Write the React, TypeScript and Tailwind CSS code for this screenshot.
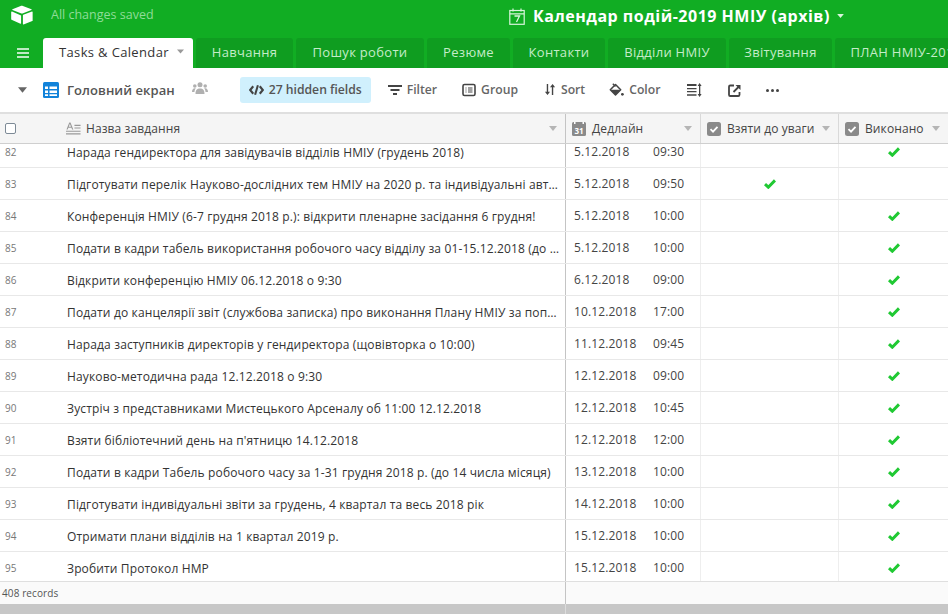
import React from "react";

const font = { fontFamily: '"Open Sans", "Noto Sans", sans-serif' };

const rows: [string, string, string, string, boolean, boolean][] = [
  ["82", "Нарада гендиректора для завідувачів відділів НМІУ (грудень 2018)", "5.12.2018", "09:30", false, true],
  ["83", "Підготувати перелік Науково-дослідних тем НМІУ на 2020 р. та індивідуальні автор", "5.12.2018", "09:50", true, false],
  ["84", "Конференція НМІУ (6-7 грудня 2018 р.): відкрити пленарне засідання 6 грудня!", "5.12.2018", "10:00", false, true],
  ["85", "Подати в кадри табель використання робочого часу відділу за 01-15.12.2018 (до 15 числа)", "5.12.2018", "10:00", false, true],
  ["86", "Відкрити конференцію НМІУ 06.12.2018 о 9:30", "6.12.2018", "09:00", false, true],
  ["87", "Подати до канцелярії звіт (службова записка) про виконання Плану НМІУ за попередній", "10.12.2018", "17:00", false, true],
  ["88", "Нарада заступників директорів у гендиректора (щовівторка о 10:00)", "11.12.2018", "09:45", false, true],
  ["89", "Науково-методична рада 12.12.2018 о 9:30", "12.12.2018", "09:00", false, true],
  ["90", "Зустріч з представниками Мистецького Арсеналу об 11:00 12.12.2018", "12.12.2018", "10:45", false, true],
  ["91", "Взяти бібліотечний день на п'ятницю 14.12.2018", "12.12.2018", "12:00", false, true],
  ["92", "Подати в кадри Табель робочого часу за 1-31 грудня 2018 р. (до 14 числа місяця)", "13.12.2018", "10:00", false, true],
  ["93", "Підготувати індивідуальні звіти за грудень, 4 квартал та весь 2018 рік", "14.12.2018", "10:00", false, true],
  ["94", "Отримати плани відділів на 1 квартал 2019 р.", "15.12.2018", "10:00", false, true],
  ["95", "Зробити Протокол НМР", "15.12.2018", "10:00", false, true],
];

const tabs: [string, string][] = [
  ["Навчання", "w-[97px]"],
  ["Пошук роботи", "w-[128px]"],
  ["Резюме", "w-[83px]"],
  ["Контакти", "w-[92px]"],
  ["Відділи НМІУ", "w-[118px]"],
  ["Звітування", "w-[103px]"],
  ["ПЛАН НМІУ-2019", "w-[142px]"],
];

const Caret = ({ className = "" }: { className?: string }) => (
  <svg viewBox="0 0 10 6" className={className} fill="currentColor">
    <path d="M0 0h10L5 6z" />
  </svg>
);

const Check = () => (
  <svg viewBox="0 0 12 10" className="h-[10px] w-[12px]" fill="none" stroke="#20c933" strokeWidth="3">
    <path d="M1 5.200 4.300 8.200 11 1.400" />
  </svg>
);

const CheckBoxIcon = () => (
  <svg viewBox="0 0 14 14" className="h-[14px] w-[14px] shrink-0">
    <rect width="14" height="14" rx="2.500" fill="#8a8a8a" />
    <path d="M3.500 7.200 6 9.600 10.500 4.800" fill="none" stroke="#fff" strokeWidth="1.800" />
  </svg>
);

const HeaderCell = ({ icon, label, className }: { icon: React.ReactNode; label: string; className: string }) => (
  <div className={`flex h-full shrink-0 items-center border-r border-[#d9d9d9] ${className}`}>
    {icon}
    <span className="ml-[6px] text-[12px] tracking-[0.1px] text-[#444]">{label}</span>
    <Caret className="mr-[8px] ml-auto h-[5px] w-[8px] text-[#b5b5b5]" />
  </div>
);

const ToolItem = ({ icon, label, className = "" }: { icon: React.ReactNode; label: string; className?: string }) => (
  <div className={`flex items-center gap-[5px] text-[12.200px] font-semibold text-[#666] ${className}`}>
    {icon}
    <span className="pt-[1px]">{label}</span>
  </div>
);

export default function App() {
  return (
    <div style={font} className="flex h-[614px] w-[948px] flex-col overflow-hidden bg-white">
      {/* top bar */}
      <div className="relative flex h-[38px] shrink-0 items-center bg-[#11ad23] pb-[8px]">
        <svg viewBox="0 0 24 22" className="ml-[11px] h-[20px] w-[22px]" fill="#fff">
          <path d="M10.500 1 1.500 4.600c-.4.2-.4.7 0 .9l9.200 3.600c.8.3 1.700.3 2.500 0l9.200-3.600c.4-.2.4-.7 0-.9L13 1c-.8-.4-1.700-.4-2.500 0z" />
          <path d="M13 11.300v9.600c0 .4.4.6.7.5l9.600-3.700c.3-.1.4-.3.4-.5V7.600c0-.4-.4-.6-.7-.5L13.400 10.800c-.2.1-.4.3-.4.5z" />
          <path d="M11 11.600 1 7.200c-.4-.2-.9.1-.9.5v8c0 .3.1.5.4.6l9.800 4.300c.4.1.7-.1.7-.5z" />
        </svg>
        <span className="ml-[18px] text-[12.500px] text-[#8fdc98]">All changes saved</span>
        <div className="absolute top-0 left-[509px] flex h-[32px] items-center">
          <svg viewBox="0 0 16 17" className="h-[17px] w-[16px]" fill="none" stroke="#d9f5dc" strokeWidth="1.200">
            <rect x="0.800" y="2.500" width="14.400" height="13.800" />
            <path d="M.8 5.800h14.400M4 .5v3M12 .5v3" />
            <path d="M5.500 8h5L7.500 14" strokeWidth="1.300" />
          </svg>
          <span className="ml-[8px] text-[16px] font-bold tracking-[0.5px] whitespace-nowrap text-white">Календар подій-2019 НМІУ (архів)</span>
          <Caret className="ml-[7px] h-[4px] w-[7px] text-[#d9f5dc]" />
        </div>
      </div>

      {/* tabs */}
      <div className="flex h-[30px] shrink-0 items-end bg-[#11ad23]">
        <div className="flex h-[30px] w-[43px] shrink-0 items-center justify-center pl-[2px]">
          <div className="flex w-[12px] flex-col gap-[2px]">
            <div className="h-[2px] bg-[#bdeac3]" />
            <div className="h-[2px] bg-[#bdeac3]" />
            <div className="h-[2px] bg-[#bdeac3]" />
          </div>
        </div>
        <div className="relative flex h-[30px] w-[150px] shrink-0 items-center rounded-t-[3px] bg-white pl-[16px] text-[13px] tracking-[0.35px] text-[#333]">
          Tasks &amp; Calendar
          <Caret className="absolute top-[11px] right-[9px] h-[5px] w-[7px] text-[#999]" />
        </div>
        <div className="ml-[3px] flex h-[30px] gap-[3px]">
          {tabs.map(([t, w]) => (
            <div key={t} className={`flex h-[30px] shrink-0 items-center justify-center rounded-t-[3px] bg-[#0f9d20] text-[13px] tracking-[0.3px] whitespace-nowrap text-[#c4ecc9] ${w}`}>
              {t}
            </div>
          ))}
        </div>
      </div>

      {/* toolbar */}
      <div className="flex h-[44px] shrink-0 items-center">
        <Caret className="ml-[18px] h-[6px] w-[9px] text-[#666]" />
        <svg viewBox="0 0 16 16" className="ml-[16px] h-[16px] w-[16px]">
          <rect width="16" height="16" rx="1.500" fill="#1283da" />
          <path d="M2 4.500h3v2.500H2zM6.500 4.500h7.500v2.500H6.500zM2 8.500h3V11H2zM6.500 8.500h7.500V11H6.500zM2 12.300h3v1.700H2zM6.500 12.300h7.500v1.700H6.500z" fill="#fff" />
        </svg>
        <span className="ml-[8px] pt-[2px] text-[13px] font-semibold tracking-[0.05px] text-[#555]">Головний екран</span>
        <svg viewBox="0 0 16 12" className="mb-[4px] ml-[17px] h-[12px] w-[16px]" fill="#b0b0b0">
          <circle cx="8" cy="2.700" r="2.500" />
          <circle cx="2.800" cy="4" r="1.800" />
          <circle cx="13.200" cy="4" r="1.800" />
          <path d="M3.500 12c0-4 1.500-5.500 4.500-5.500s4.500 1.500 4.500 5.500zM0 10c0-2 .8-3.800 2.800-3.800.5 0 .7.100 1 .3C2.800 7.500 2.500 8.700 2.500 10zM16 10c0-2-.8-3.800-2.800-3.800-.5 0-.7.100-1 .3 1 1 1.300 2.200 1.300 3.500z" />
        </svg>
        <div className="ml-[32px] flex h-[26px] w-[131px] shrink-0 items-center rounded-[3px] bg-[#d0f0fd] pl-[9px] text-[12.200px] font-semibold text-[#555]">
          <svg viewBox="0 0 16 12" className="mr-[5px] h-[12px] w-[15px]" fill="none" stroke="#444" strokeWidth="2.200">
            <path d="M4.500 2 1.300 6l3.200 4M11.500 2l3.200 4-3.200 4M9.500 1 6.500 11" />
          </svg>
          <span className="pt-[1px]">27 hidden fields</span>
        </div>
        <ToolItem
          className="ml-[17px]"
          label="Filter"
          icon={
            <svg viewBox="0 0 14 12" className="h-[12px] w-[14px]" fill="#444">
              <path d="M0 1h14v2H0zM2.500 5h9v2h-9zM5 9h4v2H5z" />
            </svg>
          }
        />
        <ToolItem
          className="ml-[25px]"
          label="Group"
          icon={
            <svg viewBox="0 0 14 14" className="h-[14px] w-[14px]" fill="none" stroke="#444">
              <rect x="1" y="1.500" width="12" height="11" rx="1.500" strokeWidth="1.600" />
              <path d="M3.500 5h1M6 5h4.500M3.500 7h1M6 7h4.500M3.500 9h1M6 9h4.500" strokeWidth="1.200" />
            </svg>
          }
        />
        <ToolItem
          className="ml-[26px]"
          label="Sort"
          icon={
            <svg viewBox="0 0 13 13" className="h-[13px] w-[12px]" fill="#444">
              <path d="M3 .5h1.500v8.500H6.500L3.800 12.500 1 9h2zM8.500 12.500H10V4h2L9.300.5 6.500 4h2z" />
            </svg>
          }
        />
        <ToolItem
          className="ml-[24px]"
          label="Color"
          icon={
            <svg viewBox="0 0 15 14" className="h-[14px] w-[15px]">
              <path d="M6.500 1.500 11.700 6.800 6.500 12 1.300 6.800z" fill="none" stroke="#444" strokeWidth="1.500" strokeLinejoin="round" />
              <path d="M1.300 6.800H11.700L6.500 12z" fill="#444" />
              <path d="M3.800 .8 6.500 3.500" stroke="#444" strokeWidth="1.400" />
              <circle cx="13.400" cy="11.300" r="1.400" fill="#444" />
            </svg>
          }
        />
        <svg viewBox="0 0 15 14" className="ml-[27px] h-[14px] w-[15px]" fill="#444">
          <path d="M0 1h9.500v2H0zM0 5h9.500v1.200H0zM0 8h9.500v1.200H0zM0 11.300h9.500v1.500H0z" />
          <path d="M12 2h1.300v10H12z" />
          <path d="M12.600 0l2 3h-4zM12.600 14l2-3h-4z" />
        </svg>
        <svg viewBox="0 0 13 13" className="ml-[26px] h-[13px] w-[13px]" fill="none" stroke="#444" strokeWidth="1.800">
          <path d="M6 1.500H2.200c-.7 0-1.200.5-1.200 1.200v8c0 .7.500 1.300 1.200 1.300h8c.7 0 1.300-.6 1.300-1.300V8" />
          <path d="M5.500 8 11 2.500" />
          <path d="M7.500 1h5v5z" fill="#444" stroke="none" />
        </svg>
        <div className="ml-[25px] flex gap-[2px]">
          <div className="h-[3px] w-[3px] rounded-full bg-[#444]" />
          <div className="h-[3px] w-[3px] rounded-full bg-[#444]" />
          <div className="h-[3px] w-[3px] rounded-full bg-[#444]" />
        </div>
      </div>

      {/* table header */}
      <div className="flex h-[32px] shrink-0 border-t-2 border-b border-t-[#dfdfdf] border-b-[#cfcfcf] bg-[#f5f5f5]">
        <div className="flex h-full w-[566px] shrink-0 items-center border-r border-[#c4c4c4]">
          <div className="ml-[5px] h-[11px] w-[11px] rounded-[2px] border border-[#7d8a96] bg-white" />
          <svg viewBox="0 0 16 13" className="ml-[50px] h-[13px] w-[15px]" fill="#999">
            <path d="M0 12.800h15.500v-1.200H0zM0 10h15.500V8.800H0zM9 6.500h6.500V5.300H9zM9 3.800h6.500V2.600H9z" />
            <path d="M3.500 0h1.300l3 7.500H6.500L5.800 5.700H2.500l-.7 1.800H.5zM3 4.500h2.300L4.150 1.500z" fillRule="evenodd" />
          </svg>
          <span className="ml-[5px] text-[12px] tracking-[0.1px] text-[#444]">Назва завдання</span>
          <Caret className="mr-[8px] ml-auto h-[5px] w-[8px] text-[#b5b5b5]" />
        </div>
        <HeaderCell
          className="w-[135px] pl-[6px]"
          label="Дедлайн"
          icon={
            <svg viewBox="0 0 14 14" className="h-[14px] w-[14px] shrink-0">
              <rect width="14" height="14" rx="1.500" fill="#8a8a8a" />
              <rect x="2" y="0" width="1.500" height="2" fill="#fff" />
              <rect x="10.500" y="0" width="1.500" height="2" fill="#fff" />
              <text x="7" y="12" textAnchor="middle" fontSize="8" fontWeight="700" fill="#fff">31</text>
            </svg>
          }
        />
        <HeaderCell className="w-[138px] pl-[6px]" label="Взяти до уваги" icon={<CheckBoxIcon />} />
        <div className="flex h-full flex-1 items-center pl-[6px]">
          <CheckBoxIcon />
          <span className="ml-[6px] text-[12px] tracking-[0.1px] text-[#444]">Виконано</span>
          <Caret className="mr-[8px] ml-auto h-[5px] w-[8px] text-[#b5b5b5]" />
        </div>
      </div>

      {/* rows */}
      <div className="h-[437px] shrink-0 overflow-hidden">
        <div className="-mt-[8px]">
          {rows.map(([n, title, date, time, a, b]) => (
            <div key={n} className="flex h-[32px] border-b border-[#e8e8e8]">
              <div className="flex w-[566px] shrink-0 items-center border-r border-[#c4c4c4]">
                <span className="w-[67px] shrink-0 pt-[2px] pl-[5px] text-[10px] text-[#777]">{n}</span>
                <span className="min-w-0 flex-1 truncate pt-[2px] pr-[4px] text-[12px] tracking-[0.14px] text-[#333]">{title}</span>
              </div>
              <div className="flex w-[135px] shrink-0 items-center border-r border-[#eeeeee] pt-[1px] text-[12px] tracking-[0.14px] text-[#444]">
                <span className="w-[87px] pl-[8px]">{date}</span>
                <span>{time}</span>
              </div>
              <div className="flex w-[138px] shrink-0 items-center justify-center border-r border-[#eeeeee]">{a && <Check />}</div>
              <div className="flex flex-1 items-center justify-center">{b && <Check />}</div>
            </div>
          ))}
        </div>
      </div>

      {/* footer */}
      <div className="flex h-[23px] shrink-0 border-t border-[#dfdfdf] bg-[#fafafa]">
        <div className="flex w-[566px] shrink-0 items-center border-r border-[#c4c4c4] pl-[2px] text-[10px] tracking-[0.1px] text-[#555]">408 records</div>
      </div>
      <div className="flex h-[10px] shrink-0 bg-[#c7c7c7]">
        <div className="h-full w-[565px] shrink-0" />
        <div className="h-full w-px bg-[#dcdcdc]" />
      </div>
    </div>
  );
}
